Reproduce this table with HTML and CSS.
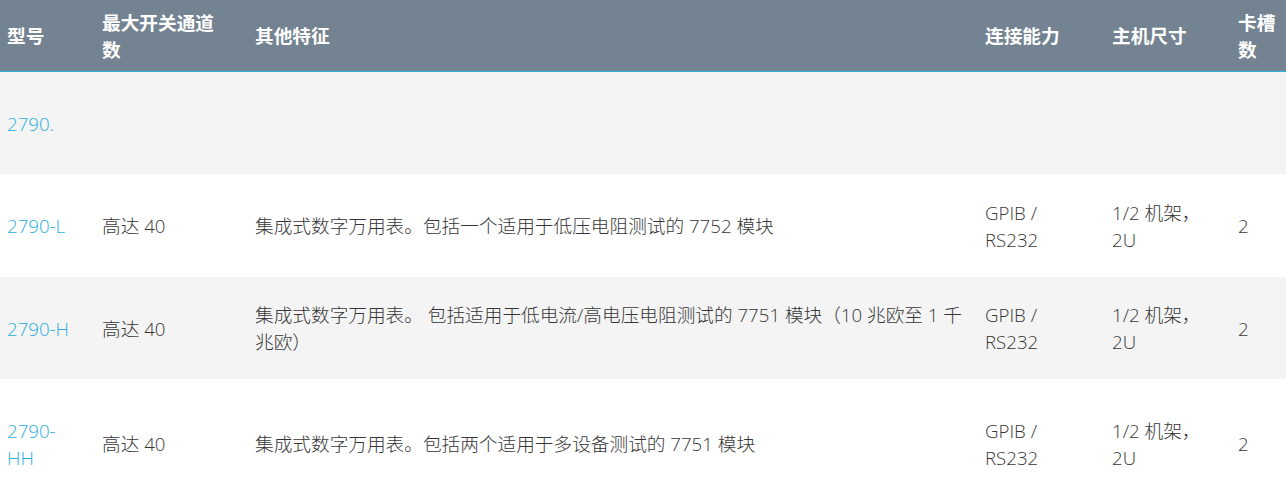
FILE: index.html
```html
<!DOCTYPE html>
<html lang="zh-CN">
<head>
<meta charset="utf-8">
<title>2790 系列</title>
<link rel="stylesheet" href="styles.css">
</head>
<body>
<table class="spec">
  <colgroup>
    <col class="c-model">
    <col class="c-chan">
    <col class="c-feat">
    <col class="c-conn">
    <col class="c-size">
    <col class="c-slot">
  </colgroup>
  <thead>
    <tr>
      <th>型号</th>
      <th>最大开关通道数</th>
      <th class="feat">其他特征</th>
      <th>连接能力</th>
      <th>主机尺寸</th>
      <th class="last">卡槽数</th>
    </tr>
  </thead>
  <tbody>
    <tr class="row alt">
      <td><a class="link" href="#">2790.</a></td>
      <td></td>
      <td class="feat"></td>
      <td></td>
      <td></td>
      <td class="last"></td>
    </tr>
    <tr class="row row-b">
      <td><a class="link" href="#">2790-L</a></td>
      <td>高达 40</td>
      <td class="feat">集成式数字万用表。包括一个适用于低压电阻测试的 7752 模块</td>
      <td>GPIB / RS232</td>
      <td>1/2 机架，2U</td>
      <td class="last">2</td>
    </tr>
    <tr class="row alt">
      <td><a class="link" href="#">2790-H</a></td>
      <td>高达 40</td>
      <td class="feat">集成式数字万用表。 包括适用于低电流/高电压电阻测试的 7751 模块（10 兆欧至 1 千兆欧）</td>
      <td>GPIB / RS232</td>
      <td>1/2 机架，2U</td>
      <td class="last">2</td>
    </tr>
    <tr class="row row-tall">
      <td><a class="link" href="#">2790-HH</a></td>
      <td>高达 40</td>
      <td class="feat">集成式数字万用表。包括两个适用于多设备测试的 7751 模块</td>
      <td>GPIB / RS232</td>
      <td>1/2 机架，2U</td>
      <td class="last">2</td>
    </tr>
  </tbody>
</table>
</body>
</html>
```

FILE: styles.css
```css
html, body {
  margin: 0;
  padding: 0;
  background: #ffffff;
  overflow: hidden;
}

body {
  font-family: "Open Sans", "Noto Sans CJK SC", sans-serif;
  font-size: 18.67px;
  font-weight: 300;
  line-height: 27px;
  color: #363636;
}

.spec {
  width: 1286px;
  table-layout: fixed;
  border-collapse: collapse;
  border-spacing: 0;
}

.c-model { width: 95px; }
.c-chan { width: 153px; }
.c-feat { width: 730px; }
.c-conn { width: 127px; }
.c-size { width: 126px; }
.c-slot { width: 55px; }

.spec th {
  height: 71px;
  padding: 0 18px 0 7px;
  background: #738391;
  color: #ffffff;
  font-weight: 700;
  text-align: left;
  vertical-align: middle;
  border-bottom: 1px solid #2cb6da;
}

.spec td {
  padding: 0 18px 0 7px;
  vertical-align: middle;
  text-align: left;
}

.spec th.feat,
.spec td.feat {
  padding-right: 4px;
}

.spec th.last,
.spec td.last {
  padding-right: 0;
}

.row td { height: 102px; }
.row-b td { height: 103px; }
.row-tall td { height: 129px; }

.alt { background: #f4f4f4; }

.link {
  color: #2aaedf;
  text-decoration: none;
}
```
